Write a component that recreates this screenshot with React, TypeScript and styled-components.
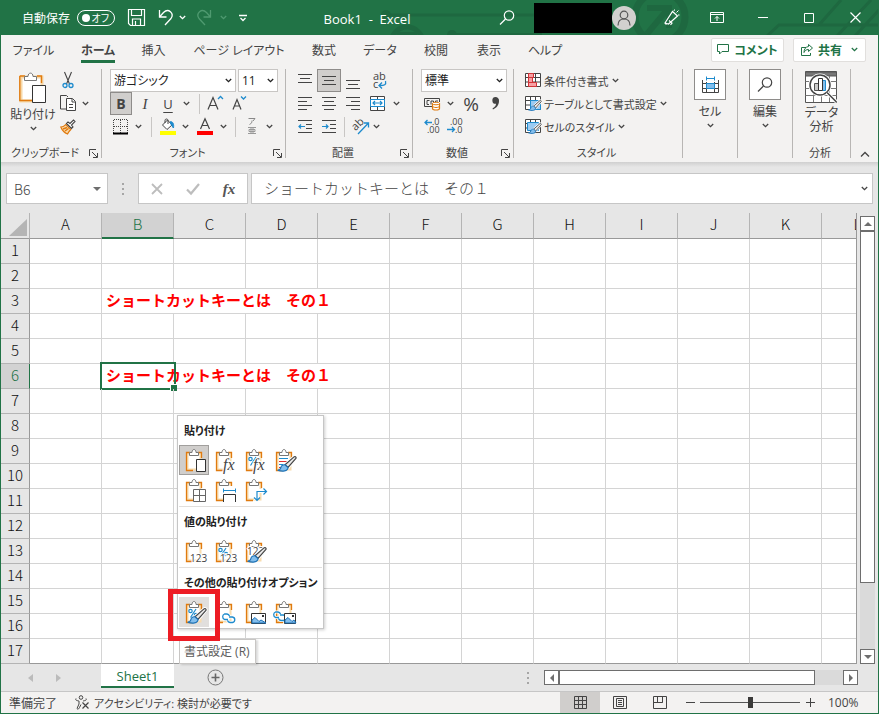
import React from "react";
import styled, { createGlobalStyle } from "styled-components";

const green = "#217346";
const ink = "#444444";
const blue = "#1e8bcd";
const orange = "#e07b10";
const uiFont = '"Open Sans", "Noto Sans CJK JP", sans-serif';
const jpFont = '"Noto Sans CJK JP", sans-serif';

const GlobalStyle = createGlobalStyle`
  * { box-sizing: border-box; }
  body { margin: 0; font-family: ${uiFont}; font-size: 12px; color: ${ink}; font-feature-settings: "palt"; }
  button, input, select { font: inherit; color: inherit; margin: 0; padding: 0; border: 0; background: none; border-radius: 0; font-feature-settings: inherit; }
  svg { display: block; flex: none; overflow: visible; }
`;

/* ---------- frame and title bar ---------- */

const Frame = styled.div`
  display: flex;
  flex-direction: column;
  min-height: 100vh;
  border: 1px solid ${green};
  border-top: 0;
  background: #e6e6e6;
`;

const TitleBar = styled.header`
  position: relative;
  display: flex;
  align-items: center;
  height: 35px;
  background: ${green};
  color: #fff;
`;

const TitlePattern = styled.svg`
  position: absolute;
  right: 0;
  top: 0;
  overflow: hidden;
`;

const QuickAccess = styled.div`
  display: flex;
  align-items: center;
  padding-left: 21px;
`;

const AutoSave = styled.label`
  display: flex;
  align-items: center;
  gap: 7px;
  white-space: nowrap;
`;

const Toggle = styled.span`
  position: relative;
  display: flex;
  align-items: center;
  justify-content: space-between;
  width: 38px;
  height: 16px;
  padding: 0 5px 0 4px;
  border: 1px solid #fff;
  border-radius: 8px;
  font-size: 10px;
  line-height: 14px;
`;

const ToggleInput = styled.input`
  position: absolute;
  inset: 0;
  opacity: 0;
`;

const Knob = styled.span`
  width: 8px;
  height: 8px;
  border-radius: 50%;
  background: #fff;
`;

const QuickButton = styled.button<{ $w: number; $dim?: boolean }>`
  display: flex;
  align-items: center;
  justify-content: center;
  width: ${(p) => p.$w}px;
  height: 32px;
  color: ${(p) => (p.$dim ? "#4f9a70" : "#fff")};
`;

const TitleText = styled.h1`
  position: relative;
  flex: 1;
  margin: 0;
  padding: 3px 14px 0 0;
  font-size: 13px;
  font-weight: 400;
  text-align: center;
  white-space: pre;
`;

const WindowTools = styled.div`
  position: relative;
  display: flex;
  align-items: center;
`;

const AccountName = styled.div`
  width: 78px;
  height: 30px;
  margin-left: 13px;
  background: #000;
`;

const Avatar = styled.button`
  display: flex;
  align-items: center;
  justify-content: center;
  width: 24px;
  height: 24px;
  margin-right: 12px;
  border-radius: 50%;
  background: #d2d0ce;
  color: #555;
`;

/* ---------- ribbon ---------- */

const TabRow = styled.nav`
  display: flex;
  align-items: center;
  height: 32px;
  padding-right: 12px;
  background: #f3f2f1;
`;

const Tab = styled.button<{ $w: number; $active?: boolean }>`
  display: flex;
  justify-content: center;
  width: ${(p) => p.$w}px;
  height: 32px;
  line-height: 32px;
  white-space: nowrap;
  font-weight: ${(p) => (p.$active ? 700 : 400)};
`;

const TabLabel = styled.span<{ $active?: boolean }>`
  height: 28px;
  border-bottom: ${(p) => (p.$active ? `3px solid ${green}` : "0")};
`;

const TabActions = styled.div`
  display: flex;
  gap: 9px;
  margin-left: auto;
  padding-bottom: 3px;
`;

const ActionButton = styled.button`
  display: flex;
  align-items: center;
  justify-content: center;
  gap: 5px;
  width: 73px;
  height: 24px;
  border: 1px solid #e1dfdd;
  border-radius: 2px;
  background: #fff;
  color: ${green};
  font-weight: 700;
  white-space: nowrap;
`;

const ActionText = styled.span`
  margin-right: 4px;
`;

const Ribbon = styled.section`
  display: flex;
  height: 95px;
  padding: 2px 0 4px;
  background: #f3f2f1;
`;

const Group = styled.div<{ $w: number; $pad?: number }>`
  display: flex;
  flex-direction: column;
  width: ${(p) => p.$w}px;
  padding-left: ${(p) => p.$pad ?? 0}px;
  border-right: 1px solid #b8b6b4;
`;

const GroupBody = styled.div`
  display: flex;
  flex: none;
  height: 74px;
`;

const Stack = styled.div`
  display: flex;
  flex-direction: column;
`;

const ToolRow = styled.div`
  display: flex;
  align-items: center;
  height: 23px;
`;

const GroupFooter = styled.div<{ $pad?: number }>`
  display: flex;
  flex: none;
  align-items: center;
  justify-content: center;
  height: 20px;
  padding-right: 3px;
  margin-left: -${(p) => p.$pad ?? 0}px;
  font-size: 11px;
  line-height: 20px;
  white-space: nowrap;
`;

const GroupName = styled.span`
  flex: 1;
  text-align: center;
`;

const Tool = styled.button<{ $w: number; $on?: boolean }>`
  display: flex;
  align-items: center;
  justify-content: center;
  width: ${(p) => p.$w}px;
  height: 23px;
  border: ${(p) => (p.$on ? "1px solid #8e8c8a" : "0")};
  background: ${(p) => (p.$on ? "#d0cecc" : "none")};
`;

const Glyph = styled.span<{ $size: number; $bold?: boolean; $italic?: boolean; $line?: boolean; $serif?: boolean }>`
  font-family: ${(p) => (p.$serif ? '"Liberation Serif", serif' : uiFont)};
  font-size: ${(p) => p.$size}px;
  line-height: 20px;
  font-weight: ${(p) => (p.$bold ? 700 : 400)};
  font-style: ${(p) => (p.$italic ? "italic" : "normal")};
  text-decoration: ${(p) => (p.$line ? "underline" : "none")};
  text-underline-offset: 3px;
`;

const Rule = styled.span<{ $l: number; $r: number }>`
  width: 1px;
  height: 20px;
  margin: 0 ${(p) => p.$r}px 0 ${(p) => p.$l}px;
  background: #c8c6c4;
`;

const Combo = styled.span<{ $w: number }>`
  position: relative;
  display: flex;
  align-items: center;
  width: ${(p) => p.$w}px;
  height: 23px;
  margin-right: 2px;
  border: 1px solid #c8c6c4;
  background: #fff;
  color: #222;
`;

const ComboSelect = styled.select`
  appearance: none;
  width: 100%;
  height: 21px;
  padding: 0 16px 0 3px;
  line-height: 21px;
`;

const ComboArrow = styled.span`
  position: absolute;
  right: 3px;
  top: 8px;
  pointer-events: none;
`;

const BigButton = styled.button<{ $w: number; $pad?: number }>`
  display: flex;
  flex-direction: column;
  align-items: center;
  width: ${(p) => p.$w}px;
  padding-top: ${(p) => p.$pad ?? 0}px;
  line-height: 15px;
  white-space: nowrap;
`;

const BigLabel = styled.span`
  padding: 4px 0;
  line-height: 15px;
`;

const TwoLine = styled.span`
  padding-top: 2px;
  line-height: 14px;
`;

const IconBox = styled.span`
  display: flex;
  align-items: center;
  justify-content: center;
  width: 32px;
  height: 31px;
  border: 1px solid #8e8c8a;
  background: #fff;
`;

const StyleButton = styled.button`
  display: flex;
  align-items: center;
  gap: 3px;
  height: 23px;
  font-size: 11px;
  white-space: nowrap;
`;

const CollapseButton = styled.button`
  display: flex;
  align-items: flex-end;
  justify-content: center;
  flex: 1;
`;

/* ---------- formula bar ---------- */

const FormulaRow = styled.div`
  display: flex;
  height: 51px;
  padding: 11px 5px 9px;
  background: linear-gradient(#cfcfcf, #e6e6e6 5px);
`;

const FieldBox = styled.div<{ $w?: number }>`
  display: flex;
  align-items: center;
  ${(p) => (p.$w ? `width: ${p.$w}px;` : "flex: 1; min-width: 0;")}
  height: 31px;
  border: 1px solid #c6c6c6;
  background: #fff;
`;

const NameInput = styled.input`
  width: 86px;
  padding-left: 7px;
  font-family: ${jpFont};
  font-size: 14px;
  font-weight: 300;
  outline: none;
`;

const FormulaInput = styled.input`
  flex: 1;
  min-width: 0;
  padding: 0 0 2px 12px;
  font-family: ${jpFont};
  font-size: 15px;
  font-weight: 300;
  font-feature-settings: normal;
  outline: none;
`;

const Grip = styled.div<{ $w: number }>`
  display: flex;
  flex-direction: column;
  align-items: center;
  justify-content: center;
  gap: 3px;
  width: ${(p) => p.$w}px;
`;

const Dot = styled.i`
  width: 2px;
  height: 2px;
  background: #a6a6a6;
`;

const FormulaTool = styled.button<{ $color: string }>`
  display: flex;
  align-items: center;
  justify-content: center;
  width: 36px;
  height: 29px;
  color: ${(p) => p.$color};
`;

/* ---------- sheet ---------- */

const SheetArea = styled.main`
  position: relative;
  display: flex;
  flex: 1;
`;

const GridClip = styled.div`
  flex: 1;
  min-width: 0;
  overflow: hidden;
  border-right: 1px solid #999;
  background: #fff;
`;

const Grid = styled.table`
  width: 893px;
  table-layout: fixed;
  border-collapse: separate;
  border-spacing: 0;
  font-family: ${jpFont};
  font-size: 15px;
  color: #222;
`;

const ColHead = styled.th<{ $on?: boolean }>`
  height: 26px;
  padding: 0;
  border-right: 1px solid #b4b4b4;
  border-bottom: ${(p) => (p.$on ? `2px solid ${green}` : "1px solid #999")};
  background: ${(p) => (p.$on ? "#d2d2d2" : "#e6e6e6")};
  color: ${(p) => (p.$on ? green : "#111")};
  font-weight: 300;
  line-height: 22px;
  vertical-align: top;
`;

const Corner = styled.th`
  padding: 0 2px 2px 8px;
  border-right: 1px solid #b4b4b4;
  border-bottom: 1px solid #999;
  background: #e6e6e6;
  vertical-align: bottom;
`;

const RowHead = styled.th<{ $on?: boolean }>`
  height: 25px;
  padding: 0;
  border-right: 1px solid ${(p) => (p.$on ? green : "#999")};
  border-bottom: 1px solid #b4b4b4;
  background: ${(p) => (p.$on ? "#d2d2d2" : "#e6e6e6")};
  color: ${(p) => (p.$on ? green : "#111")};
  font-weight: 300;
  line-height: 22px;
  vertical-align: top;
`;

const Cell = styled.td<{ $last?: boolean }>`
  position: relative;
  height: 25px;
  padding: 0 0 0 4px;
  border-right: 1px solid #d4d4d4;
  border-bottom: 1px solid ${(p) => (p.$last ? "#999" : "#d4d4d4")};
  color: #f00;
  font-weight: 700;
  line-height: 22px;
  vertical-align: top;
  white-space: nowrap;
  font-feature-settings: normal;
`;

const CellCursor = styled.span`
  position: absolute;
  left: -2px;
  top: -2px;
  width: 76px;
  height: 28px;
  border: 2px solid ${green};
  &::after {
    content: "";
    position: absolute;
    right: -3px;
    bottom: -3px;
    width: 6px;
    height: 6px;
    border: solid #fff;
    border-width: 1px 0 0 1px;
    background: ${green};
  }
`;

const VScroll = styled.div`
  display: flex;
  flex-direction: column;
  width: 15px;
  margin: 3px 3px 0 3px;
  background: #dadada;
`;

const HScroll = styled.div`
  display: flex;
  width: 314px;
  height: 15px;
  background: #dadada;
`;

const ScrollButton = styled.button`
  display: flex;
  align-items: center;
  justify-content: center;
  width: 15px;
  height: 15px;
  border: 1px solid #6e6e6e;
  background: #fff;
`;

const Thumb = styled.div<{ $vertical?: boolean }>`
  flex: ${(p) => (p.$vertical ? "352" : "256")};
  border: 1px solid #6e6e6e;
  background: #fff;
`;

const Track = styled.div<{ $vertical?: boolean }>`
  flex: ${(p) => (p.$vertical ? "66" : "28")};
`;

/* ---------- paste options ---------- */

const PasteMenu = styled.div`
  position: absolute;
  left: 176px;
  top: 202px;
  width: 147px;
  padding: 0 1px;
  border: 1px solid #c6c6c6;
  background: #fff;
  box-shadow: 1px 1px 3px rgba(0, 0, 0, 0.2);
`;

const MenuSection = styled.section`
  & + & { border-top: 1px solid #e1dfdd; }
`;

const MenuTitle = styled.h2`
  margin: 0;
  padding-left: 5px;
  font-family: ${jpFont};
  font-size: 11px;
  line-height: 29px;
  font-weight: 700;
  color: #222;
  white-space: nowrap;
`;

const MenuIcons = styled.div`
  display: flex;
  flex-wrap: wrap;
  padding-bottom: 1px;
`;

const MenuButton = styled.button<{ $state?: "on" | "hover" }>`
  width: 30px;
  height: 30px;
  background: ${(p) => (p.$state === "on" ? "#d0cecc" : p.$state === "hover" ? "#e1dfdd" : "none")};
  box-shadow: ${(p) => (p.$state === "on" ? "inset 0 0 0 1px #a19f9d" : "none")};
`;

const Highlight = styled.div`
  position: absolute;
  left: 167px;
  top: 376px;
  width: 52px;
  height: 52px;
  border: 5px solid #ed1c24;
`;

const Tooltip = styled.div`
  position: absolute;
  left: 178px;
  top: 426px;
  height: 25px;
  padding: 0 5px 0 4px;
  border: 1px solid #c8c6c4;
  background: #fff;
  color: #5c5c5c;
  line-height: 23px;
  white-space: nowrap;
  box-shadow: 2px 1px 2px rgba(0, 0, 0, 0.15);
`;

/* ---------- sheet tabs and status bar ---------- */

const SheetBar = styled.div`
  display: flex;
  align-items: center;
  height: 28px;
  padding: 0 20px 0 15px;
  border-bottom: 1px solid #c6c6c6;
`;

const NavButton = styled.button`
  display: flex;
  align-items: center;
  justify-content: center;
  width: 28px;
`;

const SheetTab = styled.button`
  align-self: flex-start;
  width: 73px;
  height: 24px;
  margin-left: 29px;
  border-bottom: 2px solid ${green};
  background: #fff;
  color: ${green};
  font-size: 13px;
  line-height: 24px;
`;

const AddSheet = styled.button`
  margin: 0 auto 0 33px;
`;

const StatusBar = styled.footer`
  display: flex;
  align-items: center;
  height: 21px;
  padding-left: 8px;
  background: #f3f2f1;
  white-space: nowrap;
`;

const StatusButton = styled.button`
  display: flex;
  align-items: center;
  gap: 4px;
  margin: 0 auto 0 18px;
  font-size: 11px;
`;

const ViewButton = styled.button<{ $on?: boolean }>`
  display: flex;
  align-items: center;
  justify-content: center;
  width: 40px;
  height: 21px;
  background: ${(p) => (p.$on ? "#d0cecc" : "none")};
`;

const ZoomButton = styled.button`
  display: flex;
  align-items: center;
  justify-content: center;
  width: 20px;
  height: 21px;
`;

const ZoomSlider = styled.input`
  appearance: none;
  width: 100px;
  height: 21px;
  background: linear-gradient(#555, #555) center / 100% 1px no-repeat;
  &::-webkit-slider-thumb {
    appearance: none;
    width: 5px;
    height: 11px;
    background: #3b3a39;
  }
`;

const ZoomValue = styled.span`
  width: 58px;
  padding-left: 8px;
`;

/* ---------- icons ---------- */

type IconProps = { w?: number; h?: number; children: React.ReactNode };

const Icon = ({ w = 16, h = 16, children }: IconProps) => (
  <svg width={w} height={h} viewBox={`0 0 ${w} ${h}`} fill="none" stroke="currentColor" aria-hidden="true">
    {children}
  </svg>
);

const Chevron = () => (
  <Icon w={7} h={5}>
    <path d="M.8 1l2.7 2.7L6.2 1" strokeWidth="1.3" />
  </Icon>
);

const Launcher = () => (
  <Icon w={9} h={9}>
    <path d="M.5 7V.5H7M3 3l5 5M8.5 4v4.5H4" />
  </Icon>
);

const Triangle = ({ dir }: { dir: "up" | "down" | "left" | "right" }) => {
  const d = { up: "M0 6h8L4 2z", down: "M0 2h8L4 6z", left: "M6 0v8L2 4z", right: "M2 0v8l4-4z" }[dir];
  return (
    <Icon w={8} h={8}>
      <path d={d} fill="#6e6e6e" stroke="none" />
    </Icon>
  );
};

const Person = () => (
  <Icon w={16} h={16}>
    <circle cx="8" cy="5" r="3.8" strokeWidth="1.2" />
    <path d="M2 15.500c0-4.500 2.500-6.500 6-6.500s6 2 6 6.500" strokeWidth="1.2" />
  </Icon>
);

const PasteLarge = () => (
  <Icon w={28} h={31}>
    <path d="M2 5h21v24H2z" fill="#fff" stroke="#f6d8a8" strokeWidth="3" />
    <path d="M.8 4v24.5h13M.8 4H6m12 0h4.500v7" stroke={orange} strokeWidth="1.4" />
    <path d="M5.500 8.500V4.500h3.500c0-4.500 5-4.500 5 0h3.500v4z" fill="#fff" stroke="#777" />
    <path d="M13.500 13.500h13v17h-13z" fill="#fff" stroke="#333" />
  </Icon>
);

const Cut = () => (
  <Icon w={12} h={17}>
    <path d="M2.500 0l5 12M9.500 0l-5 12" strokeWidth="1.1" />
    <circle cx="3" cy="13.500" r="2" stroke={blue} strokeWidth="1.3" />
    <circle cx="9" cy="13.500" r="2" stroke={blue} strokeWidth="1.3" />
  </Icon>
);

const Copy = () => (
  <Icon w={17} h={17}>
    <path d="M6 14H.5V.5h6L8 2" />
    <path d="M6.500 3.500h6l3 3v9h-9z" fill="#fff" />
    <path d="M12 4v3h3M9 9.500h4M9 12.500h4" />
  </Icon>
);

const Painter = () => (
  <Icon w={16} h={16}>
    <path d="M.8 8c3 0 4-1.500 5-2.500l5 5c-1 1-2.500 2.500-3.300 4.500C5 14 2 11 .8 8z" fill="#fbd9a8" stroke={orange} strokeWidth="1.200" />
    <path d="M3 10l4-1.500M5 12l3.500-2.500" stroke={orange} strokeWidth="1.500" />
    <path d="M6.500 4.500l5 5 1.500-1.500-1.500-2L15 2.500 13.500 1 10 4.500 8 3z" fill="#fff" strokeWidth="1.100" />
  </Icon>
);

const BordersIcon = () => (
  <Icon w={16} h={16}>
    <path d="M1 .5h14M1 7.500h14M.5 1v13M7.500 1v13M14.500 1v13" strokeDasharray="1 1" />
    <path d="M0 14.500h15" stroke="#000" strokeWidth="2" />
  </Icon>
);

const FillIcon = () => (
  <Icon w={16} h={17}>
    <path d="M2.500 7l5-5 4.500 5-5 4.500z" fill="#fff" />
    <path d="M5 5V2.500C5 .5 8 .5 8 2.500V6" />
    <path d="M10.500 3.500c3 .5 3.500 3 3 6.500-1.500-1-1-3-3-4z" fill={blue} stroke={blue} />
    <path d="M0 15h16" stroke="#ff0" strokeWidth="4" />
  </Icon>
);

const FontColorIcon = () => (
  <Icon w={16} h={17}>
    <path d="M3.500 11L8 .8 12.500 11M5 7.500h6" strokeWidth="1.2" />
    <path d="M0 15h16" stroke="#f00" strokeWidth="4" />
  </Icon>
);

const PhoneticIcon = () => (
  <Icon w={10} h={17}>
    <path d="M1.500 .5h6.500L6 3M5 2.500c0 2-.5 3-2.500 4" stroke="#888" />
    <path d="M1 9.500h8M2 11.500h6v2H2zM1 15.500h8M4 9v6M6 9v6" stroke="#999" />
  </Icon>
);

const GrowIcon = ({ down }: { down?: boolean }) => (
  <Icon w={17} h={17}>
    <path d={down ? "M2 14.500l4-10 4 10M3.500 11h5" : "M1 14.500L6 2.500l5 12M3 10.500h6"} strokeWidth="1.2" />
    <path d={down ? "M10 1.500l2.500 2.500L15 1.500" : "M11 4L13.500 1.500 16 4"} stroke={blue} strokeWidth="1.3" />
  </Icon>
);

const Lines = ({ rows, y = 1 }: { rows: Array<[number, number]>; y?: number }) => (
  <Icon w={15} h={16}>
    {rows.map(([x, w], i) => (
      <path key={i} d={`M${x} ${y + i * 4 + 0.5}h${w}`} />
    ))}
  </Icon>
);

const IndentIcon = ({ more }: { more?: boolean }) => (
  <Icon w={15} h={15}>
    <path d="M0 1.500h14M8 5.500h6M8 9.500h6M0 13.500h14" />
    <path d={more ? "M0 7.500h6M4 5.500l2 2-2 2" : "M1 7.500h6M3 5.500l-2 2 2 2"} stroke={blue} strokeWidth="1.2" />
  </Icon>
);

const WrapIcon = () => (
  <Icon w={16} h={18}>
    <text x="1" y="8" fontSize="11" fill="currentColor" stroke="none">ab</text>
    <text x="1" y="16" fontSize="11" fill="currentColor" stroke="none">c</text>
    <path d="M13.500 9c1 4-1 4.500-6 4.500M10 10.500l-3 3 3 3" stroke={blue} strokeWidth="1.3" />
  </Icon>
);

const MergeIcon = () => (
  <Icon w={16} h={16}>
    <path d="M.5.5h14v14H.5zM7.500.5v3M7.500 11v3" fill="#fff" />
    <path d="M.5 3.500h14v7H.5z" fill="#fff" stroke={blue} />
    <path d="M3 7h9M5 5L3 7l2 2M10 5l2 2-2 2" stroke={blue} strokeWidth="1.2" />
  </Icon>
);

const OrientIcon = () => (
  <Icon w={18} h={17}>
    <text x="1" y="11" fontSize="11" transform="rotate(-45 5 9)" fill="currentColor" stroke="none">ab</text>
    <path d="M6 16L16 5.500M12 5h4.500v4.500" stroke={blue} strokeWidth="1.3" />
  </Icon>
);

const CurrencyIcon = () => (
  <Icon w={17} h={14}>
    <path d="M8 9.500H.5v-8h15V5" />
    <path d="M5.500 3.500H3v4h2M7 7.500V4h2.500v3M11.500 6V4H14" />
    <path d="M8.500 6.500v5c0 2 7 2 7 0v-5z" fill="#fff" stroke={orange} strokeWidth="1.2" />
    <ellipse cx="12" cy="6.500" rx="3.500" ry="1.300" fill="#fff" stroke={orange} />
    <path d="M8.500 9c0 2 7 2 7 0" stroke={orange} />
  </Icon>
);

const DecimalIcon = ({ less }: { less?: boolean }) => (
  <Icon w={17} h={17}>
    <text x={less ? 3 : 8} y="7" fontSize="9" fill="currentColor" stroke="none">{less ? ".00" : ".0"}</text>
    <text x={less ? 8 : 3} y="15" fontSize="9" fill="currentColor" stroke="none">{less ? ".0" : ".00"}</text>
    <path d={less ? "M0 11.500h7M5 9l2.500 2.500L5 14" : "M1 4.500h7M3.500 2L1 4.500 3.500 7"} stroke={blue} strokeWidth="1.3" />
  </Icon>
);

const CommaIcon = () => (
  <Icon w={9} h={13}>
    <path d="M4.500 0a3.500 3.500 0 0 1 3.500 4c0 4-2.500 7-6 8.500l-.5-1C4 10 5 8.500 5 6.800A3.300 3.300 0 1 1 4.500 0z" fill="#444" stroke="none" />
  </Icon>
);

const TableBase = () => <path d="M.5.500h15v13H.5zM.5 4.500h15M.5 9h15M5.500.5v13M10.500.5v13" fill="#fff" stroke="#444" />;

const Brush = ({ x = 0, y = 0, s = 1 }: { x?: number; y?: number; s?: number }) => (
  <g transform={`translate(${x} ${y}) scale(${s})`}>
    <path d="M18.500.8c.8.600.800 1.200.2 1.800L11 11.500 8 8.800 17 .9c.5-.4 1-.4 1.500-.1z" fill="#fff" stroke="#fff" strokeWidth="3" />
    <path d="M18.500.8c.8.600.800 1.200.2 1.800L11 11.500 8 8.800 17 .9c.5-.4 1-.4 1.500-.1z" fill="#e8e8e8" stroke="#444" strokeWidth="1.200" />
    <path d="M8 8.800c-2.800-.3-4 1.700-4.300 3.300-.3 1.300-1.300 2-3 2 4.500 1.700 10.300 1.200 10.300-2.600z" fill="#83beec" stroke="#1c72b8" strokeWidth="1.200" />
  </g>
);

const ConditionalIcon = () => (
  <Icon w={16} h={15}>
    <TableBase />
    <path d="M3.500.500h5v4h-5zM3.500 4.500h4v5h-4zM3.500 9.500h8v4h-8z" fill="#f7a1a5" stroke="#d13438" />
  </Icon>
);

const TableStyleIcon = ({ solid }: { solid?: boolean }) => (
  <Icon w={16} h={16}>
    <TableBase />
    <path d={solid ? "M2.500 3.500h11v8h-11z" : "M5.500 4.500h10v9h-10z"} fill="#9bcbf2" stroke={blue} />
    <Brush x={3} y={4} s={0.7} />
  </Icon>
);

const CellsIcon = () => (
  <Icon w={17} h={17}>
    <path d="M.5 4v12.500h16V4M.5 7.500h16M.5 12.500h16M4.500 6v10.500M12.500 6v10.500" />
    <path d="M4.500 7.500h8v5h-8z" fill="#83beec" stroke={blue} />
    <path d="M4 2.500h9M4.500.5v4M12.500.5v4" stroke={blue} />
  </Icon>
);

const SearchIcon = () => (
  <Icon w={16} h={16}>
    <circle cx="10" cy="5.500" r="4.700" strokeWidth="1.200" />
    <path d="M6.500 9L1 14.500" strokeWidth="1.200" />
  </Icon>
);

const AnalysisIcon = () => (
  <Icon w={33} h={33}>
    <path d="M.5.500h31v31H.5z" fill="#fff" stroke="#555" />
    <path d="M.5 1h31v4H.5z" fill="#777" stroke="#555" />
    <path d="M.5 10.500h31M.5 17.500h31M.5 24.500h31M8.500 5v26M16.500 5v26M24.500 5v26" stroke="#777" />
    <circle cx="15" cy="14" r="11.500" fill="#fff" stroke="none" />
    <circle cx="15" cy="14" r="10" fill="#fff" stroke="#444" strokeWidth="1.500" />
    <path d="M22 21.500l9.500 9.500" strokeWidth="3.500" stroke="#fff" />
    <path d="M22 21.500l9.500 9.500" strokeWidth="1.500" stroke="#444" />
    <path d="M9.500 12.500h4v7h-4z" fill="#ccc" stroke="#555" />
    <path d="M17.500 9.500h3v10h-3z" fill="#83beec" stroke={blue} />
    <path d="M13.500 7.500h4v12h-4z" fill="#fff" stroke="#333" />
  </Icon>
);

const Clipboard = ({ children }: { children?: React.ReactNode }) => (
  <Icon w={30} h={30}>
    <path d="M8.500 8.500h13v16h-13z" fill="#fff" stroke="#f8dcae" strokeWidth="2" />
    <path d="M11 7.500H7.500v18H14M19 7.500h3.500V13" stroke={orange} strokeWidth="1.300" />
    <path d="M10.500 10.500v-3h2.500c0-4 4-4 4 0h2.500v3z" fill="#fff" stroke="#777" />
    {children}
  </Icon>
);

const Digits = ({ y = 26, x = 11 }: { y?: number; x?: number }) => (
  <text x={x} y={y} fontSize="10" fill="#444" stroke="#fff" strokeWidth="2" paintOrder="stroke">123</text>
);
const FxText = () => (
  <text x="14" y="25" fontSize="16" fontStyle="italic" fontFamily="Liberation Serif, serif" fill="#444" stroke="#fff" strokeWidth="2" paintOrder="stroke">fx</text>
);
const Percent = () => (
  <g stroke={blue} strokeWidth="1.200">
    <path d="M17 12l-5.500 8.500" />
    <circle cx="11.500" cy="14" r="1.700" />
    <circle cx="17" cy="18" r="1.700" />
  </g>
);
const LinkMark = ({ x, y }: { x: number; y: number }) => (
  <g transform={`translate(${x} ${y})`}>
    <path d="M7 6.500H3.500a3 3 0 0 1 0-5.500H6a3 3 0 0 1 2.500 2M8 4h3.500a2.800 2.800 0 0 1 0 5.500H9a3 3 0 0 1-2.500-2" stroke="#fff" strokeWidth="3" />
    <path d="M7 6.500H3.500a3 3 0 0 1 0-5.500H6a3 3 0 0 1 2.500 2M8 4h3.500a2.800 2.800 0 0 1 0 5.500H9a3 3 0 0 1-2.500-2" stroke={blue} strokeWidth="1.300" />
  </g>
);
const Picture = ({ x, w }: { x: number; w: number }) => (
  <g>
    <path d={`M${x}.500 16.500h${w}v10h-${w}z`} fill="#fff" stroke="#333" />
    <path d={`M${x + 1} 26v-3l3-2.500 4 4 2-1.500 ${w - 9} 3z`} fill="#83beec" stroke="#1c72b8" />
    <path d={`M${x + w - 3} 19h2`} stroke="#333" strokeWidth="2" />
  </g>
);

const AccessibilityIcon = () => (
  <Icon w={15} h={15}>
    <circle cx="6" cy="2.500" r="1.800" />
    <path d="M1 3.500c-1 2 1 2 3 2.500v3l-2 4.500c1 1.500 2 0 2.500-1L6 9.500M11 3.500c1 2-1 2-3 2.500" />
    <path d="M7.500 7.500l6 6M13.500 7.500l-6 6" strokeWidth="1.200" />
  </Icon>
);

/* ---------- data ---------- */

const tabs: Array<[string, number]> = [
  ["ファイル", 65], ["ホーム", 64], ["挿入", 47], ["ページ レイアウト", 124], ["数式", 46],
  ["データ", 66], ["校閲", 46], ["表示", 60], ["ヘルプ", 52],
];
const columns = ["A", "B", "C", "D", "E", "F", "G", "H", "I", "J", "K", "L"];
const rows = Array.from({ length: 17 }, (_, i) => i + 1);
const phrase = "ショートカットキーとは　その１";
const cellText: Record<number, string> = { 3: phrase, 6: phrase };

const Drop = ({ w = 14, label }: { w?: number; label: string }) => (
  <Tool $w={w} aria-label={label}><Chevron /></Tool>
);

const Footer = ({ name, pad, launch }: { name: string; pad?: number; launch?: boolean }) => (
  <GroupFooter $pad={pad}>
    <GroupName>{name}</GroupName>
    {launch && <button aria-label={`${name}の設定`}><Launcher /></button>}
  </GroupFooter>
);

const TitleSection = () => (
  <TitleBar>
    <TitlePattern width="500" height="35" viewBox="379 0 500 35" fill="none" stroke="#1e6840" aria-hidden="true">
      <circle cx="387" cy="15" r="5" fill="#1e6840" stroke="none" />
      <path d="M387 15h150" strokeWidth="3" />
      <circle cx="408" cy="43" r="16" strokeWidth="5" />
      <path d="M398 34h20" strokeWidth="4" />
      <circle cx="453" cy="35" r="5" fill="#1e6840" stroke="none" />
      <path d="M453 35h90" strokeWidth="4" />
      <circle cx="661" cy="17" r="25" strokeWidth="7" />
      <path d="M648 8h22v20M668 10l-20 24" strokeWidth="6" />
      <path d="M768 36l12-11h99M838 36l34-36M820 25l22-25M856 36l24-26" strokeWidth="3" />
    </TitlePattern>
    <QuickAccess>
      <AutoSave>
        自動保存
        <Toggle>
          <ToggleInput type="checkbox" role="switch" />
          <Knob />オフ
        </Toggle>
      </AutoSave>
      <QuickButton $w={42} aria-label="上書き保存">
        <Icon w={17} h={17}><path d="M.5.500h16v16h-14l-2-2zM3.500.500v6h10v-6M4.500 16v-6h8v6M7.500 12v4" strokeWidth="1.200" /></Icon>
      </QuickButton>
      <QuickButton $w={18} aria-label="元に戻す">
        <Icon w={16} h={17}><path d="M1.500 1v7h7M1.500 8l4-4.500c5-5 11 1 7.500 6L7 16" strokeWidth="1.300" /></Icon>
      </QuickButton>
      <QuickButton $w={15} aria-label="元に戻すの一覧"><Chevron /></QuickButton>
      <QuickButton $w={27} $dim aria-label="やり直し">
        <Icon w={16} h={17}><path d="M14.500 1v7h-7M14.500 8l-4-4.500c-5-5-11 1-7.500 6L9 16" strokeWidth="1.300" /></Icon>
      </QuickButton>
      <QuickButton $w={13} $dim aria-label="やり直しの一覧"><Chevron /></QuickButton>
      <QuickButton $w={25} aria-label="クイック アクセスの設定">
        <Icon w={8} h={8}><path d="M0 1.500h8M1.500 4L4 6.500 6.500 4" strokeWidth="1.300" /></Icon>
      </QuickButton>
    </QuickAccess>
    <TitleText>{"Book1  -  Excel"}</TitleText>
    <WindowTools>
      <QuickButton $w={28} aria-label="検索"><SearchIcon /></QuickButton>
      <AccountName />
      <Avatar aria-label="アカウント"><Person /></Avatar>
      <QuickButton $w={46} aria-label="新機能">
        <Icon w={17} h={17}>
          <path d="M2 14L9.500 2.500l5 4.500-9 8zM2 14l1.500 1.500M6 11.500l3 2.500-1.500 2" strokeWidth="1.200" />
          <path d="M11 2l.5-1.500M13.500 3.500L15.500 1.500M15 6h1.500" />
        </Icon>
      </QuickButton>
      <QuickButton $w={46} aria-label="リボンの表示オプション">
        <Icon w={14} h={12}><path d="M.5.500h13v10H.5zM.5 2.500h13M7 9V4.500M5 6.500l2-2 2 2" /></Icon>
      </QuickButton>
      <QuickButton $w={46} aria-label="最小化"><Icon w={10} h={10}><path d="M0 4.500h10" /></Icon></QuickButton>
      <QuickButton $w={46} aria-label="最大化"><Icon w={10} h={10}><path d="M.5.500h9v9h-9z" /></Icon></QuickButton>
      <QuickButton $w={46} aria-label="閉じる"><Icon w={11} h={11}><path d="M.5.500l10 10M10.500.500l-10 10" strokeWidth="1.200" /></Icon></QuickButton>
    </WindowTools>
  </TitleBar>
);

const RibbonSection = () => (
  <Ribbon>
    <Group $w={101} $pad={5}>
      <GroupBody>
        <BigButton $w={54} $pad={3}>
          <PasteLarge />
          <BigLabel>貼り付け</BigLabel>
          <Chevron />
        </BigButton>
        <Stack>
          <ToolRow><Tool $w={16} aria-label="切り取り"><Cut /></Tool></ToolRow>
          <ToolRow><Tool $w={16} aria-label="コピー"><Copy /></Tool><Drop w={18} label="コピーのオプション" /></ToolRow>
          <ToolRow><Tool $w={16} aria-label="書式のコピー"><Painter /></Tool></ToolRow>
        </Stack>
      </GroupBody>
      <Footer name="クリップボード" pad={5} launch />
    </Group>

    <Group $w={184} $pad={8}>
      <GroupBody>
        <Stack>
          <ToolRow>
            <Combo $w={126}>
              <ComboSelect aria-label="フォント"><option>游ゴシック</option></ComboSelect>
              <ComboArrow><Chevron /></ComboArrow>
            </Combo>
            <Combo $w={40}>
              <ComboSelect aria-label="フォント サイズ"><option>11</option></ComboSelect>
              <ComboArrow><Chevron /></ComboArrow>
            </Combo>
          </ToolRow>
          <ToolRow>
            <Tool $w={22} $on aria-label="太字"><Glyph $size={14} $bold>B</Glyph></Tool>
            <Tool $w={26} aria-label="斜体"><Glyph $size={15} $italic $serif>I</Glyph></Tool>
            <Tool $w={20} aria-label="下線"><Glyph $size={13} $line>U</Glyph></Tool>
            <Drop w={17} label="下線の種類" />
            <Rule $l={4} $r={5} />
            <Tool $w={20} aria-label="フォント サイズの拡大"><GrowIcon /></Tool>
            <Tool $w={28} aria-label="フォント サイズの縮小"><GrowIcon down /></Tool>
          </ToolRow>
          <ToolRow>
            <Tool $w={21} aria-label="罫線"><BordersIcon /></Tool>
            <Drop w={15} label="罫線の種類" />
            <Rule $l={5} $r={7} />
            <Tool $w={17} aria-label="塗りつぶしの色"><FillIcon /></Tool>
            <Drop w={18} label="塗りつぶしの色の一覧" />
            <Tool $w={22} aria-label="フォントの色"><FontColorIcon /></Tool>
            <Drop w={14} label="フォントの色の一覧" />
            <Rule $l={5} $r={7} />
            <Tool $w={18} aria-label="ふりがな"><PhoneticIcon /></Tool>
            <Drop w={16} label="ふりがなの設定" />
          </ToolRow>
        </Stack>
      </GroupBody>
      <Footer name="フォント" pad={8} launch />
    </Group>

    <Group $w={127} $pad={7}>
      <GroupBody>
        <Stack>
          <ToolRow>
            <Tool $w={24} aria-label="上揃え"><Lines rows={[[0, 14], [2, 10], [0, 14]]} /></Tool>
            <Tool $w={24} $on aria-label="上下中央揃え"><Lines y={3} rows={[[0, 14], [2, 10], [0, 14]]} /></Tool>
            <Tool $w={24} aria-label="下揃え"><Lines y={7} rows={[[0, 14], [2, 10], [0, 14]]} /></Tool>
            <Tool $w={30} aria-label="折り返して全体を表示する"><WrapIcon /></Tool>
          </ToolRow>
          <ToolRow>
            <Tool $w={24} aria-label="左揃え"><Lines rows={[[0, 14], [0, 9], [0, 14], [0, 9]]} /></Tool>
            <Tool $w={24} aria-label="中央揃え"><Lines rows={[[0, 14], [2, 10], [0, 14], [2, 10]]} /></Tool>
            <Tool $w={24} aria-label="右揃え"><Lines rows={[[0, 14], [5, 9], [0, 14], [5, 9]]} /></Tool>
            <Tool $w={26} aria-label="セルを結合して中央揃え"><MergeIcon /></Tool>
            <Drop w={10} label="結合の種類" />
          </ToolRow>
          <ToolRow>
            <Tool $w={24} aria-label="インデントを減らす"><IndentIcon /></Tool>
            <Tool $w={24} aria-label="インデントを増やす"><IndentIcon more /></Tool>
            <Rule $l={3} $r={7} />
            <Tool $w={18} aria-label="方向"><OrientIcon /></Tool>
            <Drop w={12} label="方向の一覧" />
          </ToolRow>
        </Stack>
      </GroupBody>
      <Footer name="配置" pad={7} launch />
    </Group>

    <Group $w={101} $pad={8}>
      <GroupBody>
        <Stack>
          <ToolRow>
            <Combo $w={86}>
              <ComboSelect aria-label="表示形式"><option>標準</option></ComboSelect>
              <ComboArrow><Chevron /></ComboArrow>
            </Combo>
          </ToolRow>
          <ToolRow>
            <Tool $w={22} aria-label="通貨表示形式"><CurrencyIcon /></Tool>
            <Drop w={14} label="通貨の一覧" />
            <Tool $w={28} aria-label="パーセント スタイル"><Glyph $size={19}>%</Glyph></Tool>
            <Tool $w={20} aria-label="桁区切りスタイル"><CommaIcon /></Tool>
          </ToolRow>
          <ToolRow>
            <Tool $w={23} aria-label="小数点以下の表示桁数を増やす"><DecimalIcon /></Tool>
            <Tool $w={23} aria-label="小数点以下の表示桁数を減らす"><DecimalIcon less /></Tool>
          </ToolRow>
        </Stack>
      </GroupBody>
      <Footer name="数値" pad={8} launch />
    </Group>

    <Group $w={169} $pad={11}>
      <GroupBody>
        <Stack>
          <StyleButton><ConditionalIcon />条件付き書式 <Chevron /></StyleButton>
          <StyleButton><TableStyleIcon />テーブルとして書式設定 <Chevron /></StyleButton>
          <StyleButton><TableStyleIcon solid />セルのスタイル <Chevron /></StyleButton>
        </Stack>
      </GroupBody>
      <Footer name="スタイル" pad={11} />
    </Group>

    <Group $w={55}>
      <BigButton $w={54}>
        <IconBox><CellsIcon /></IconBox>
        <BigLabel>セル</BigLabel>
        <Chevron />
      </BigButton>
    </Group>
    <Group $w={55}>
      <BigButton $w={54}>
        <IconBox><SearchIcon /></IconBox>
        <BigLabel>編集</BigLabel>
        <Chevron />
      </BigButton>
    </Group>
    <Group $w={58}>
      <GroupBody>
        <BigButton $w={57} $pad={2}>
          <AnalysisIcon />
          <TwoLine>データ<br />分析</TwoLine>
        </BigButton>
      </GroupBody>
      <Footer name="分析" />
    </Group>
    <CollapseButton aria-label="リボンを折りたたむ">
      <Icon w={10} h={7}><path d="M1 5.500l4-4 4 4" strokeWidth="1.300" /></Icon>
    </CollapseButton>
  </Ribbon>
);

const PasteOptions = () => (
  <PasteMenu role="menu">
    <MenuSection>
      <MenuTitle>貼り付け</MenuTitle>
      <MenuIcons>
        <MenuButton $state="on" aria-label="貼り付け"><Clipboard><path d="M17.500 14.500h9v12h-9z" fill="#fff" stroke="#333" /></Clipboard></MenuButton>
        <MenuButton aria-label="数式"><Clipboard><FxText /></Clipboard></MenuButton>
        <MenuButton aria-label="数式と数値の書式"><Clipboard><Percent /><FxText /></Clipboard></MenuButton>
        <MenuButton aria-label="元の書式を保持"><Clipboard><path d="M10 13.500h9M10 19.500h6" stroke={blue} /><path d="M10 16.500h8M10 22.500h3" stroke="#e03030" /><Brush x={8} y={11} /></Clipboard></MenuButton>
        <MenuButton aria-label="罫線なし"><Clipboard><path d="M14.500 14.500h12v12h-12zM20.500 14.500v12M14.500 20.500h12" fill="#fff" stroke="#666" /></Clipboard></MenuButton>
        <MenuButton aria-label="元の列幅を保持"><Clipboard><path d="M14 11h14v16H14z" fill="#fff" stroke="none" /><path d="M14.500 27v-7.500h12V27" stroke="#333" /><path d="M15 15.500h11M14.500 13.500v4M26.500 13.500v4" stroke={blue} /></Clipboard></MenuButton>
        <MenuButton aria-label="行列の入れ替え"><Clipboard><path d="M24 16h-7v9" stroke="#fff" strokeWidth="4" /><path d="M27 16.500h-9v9M24.500 13.500l3 3-3 3M15 22.500l3 3 3-3" stroke={blue} strokeWidth="1.200" /></Clipboard></MenuButton>
      </MenuIcons>
    </MenuSection>
    <MenuSection>
      <MenuTitle>値の貼り付け</MenuTitle>
      <MenuIcons>
        <MenuButton aria-label="値"><Clipboard><Digits /></Clipboard></MenuButton>
        <MenuButton aria-label="値と数値の書式"><Clipboard><Percent /><Digits /></Clipboard></MenuButton>
        <MenuButton aria-label="値と元の書式"><Clipboard><Digits x={8} y={19} /><Brush x={8} y={11} /></Clipboard></MenuButton>
      </MenuIcons>
    </MenuSection>
    <MenuSection>
      <MenuTitle>その他の貼り付けオプション</MenuTitle>
      <MenuIcons>
        <MenuButton $state="hover" aria-label="書式設定"><Clipboard><Percent /><Brush x={8} y={11} /></Clipboard></MenuButton>
        <MenuButton aria-label="リンク貼り付け"><Clipboard><LinkMark x={12} y={16} /></Clipboard></MenuButton>
        <MenuButton aria-label="図"><Clipboard><Picture x={12} w={14} /></Clipboard></MenuButton>
        <MenuButton aria-label="リンクされた図"><Clipboard><LinkMark x={3} y={14} /><Picture x={15} w={11} /></Clipboard></MenuButton>
      </MenuIcons>
    </MenuSection>
  </PasteMenu>
);

const Sheet = () => (
  <SheetArea>
    <GridClip>
      <Grid>
        <colgroup>
          <col width={29} />
          {columns.map((c) => <col key={c} width={72} />)}
        </colgroup>
        <thead>
          <tr>
            <Corner aria-label="すべて選択"><Icon w={18} h={17}><path d="M18 0v17H0z" fill="#b4b4b4" stroke="none" /></Icon></Corner>
            {columns.map((c) => <ColHead key={c} $on={c === "B"}>{c}</ColHead>)}
          </tr>
        </thead>
        <tbody>
          {rows.map((r) => (
            <tr key={r}>
              <RowHead $on={r === 6}>{r}</RowHead>
              {columns.map((c, i) => {
                const text = cellText[r];
                if (text && i > 1 && i < 5) return null;
                const filled = text && i === 1;
                return (
                  <Cell key={c} colSpan={filled ? 4 : 1} $last={r === rows.length}>
                    {filled ? text : null}
                    {filled && r === 6 ? <CellCursor /> : null}
                  </Cell>
                );
              })}
            </tr>
          ))}
        </tbody>
      </Grid>
    </GridClip>
    <VScroll>
      <ScrollButton aria-label="上へスクロール"><Triangle dir="up" /></ScrollButton>
      <Thumb $vertical />
      <Track $vertical />
      <ScrollButton aria-label="下へスクロール"><Triangle dir="down" /></ScrollButton>
    </VScroll>
    <PasteOptions />
    <Tooltip role="tooltip">書式設定 (R)</Tooltip>
    <Highlight />
  </SheetArea>
);

export default function App() {
  return (
    <>
      <GlobalStyle />
      <Frame>
        <TitleSection />
        <TabRow>
          {tabs.map(([name, w]) => (
            <Tab key={name} $w={w} $active={name === "ホーム"}>
              <TabLabel $active={name === "ホーム"}>{name}</TabLabel>
            </Tab>
          ))}
          <TabActions>
            <ActionButton>
              <Icon w={12} h={11}><path d="M.5.500h11v7H5L2.500 10V7.500h-2z" /></Icon>
              コメント
            </ActionButton>
            <ActionButton>
              <Icon w={12} h={12}><path d="M5 3.500H.5v8h9V9" /><path d="M7.500.5l4 3.500-4 3.500v-2C5 5.500 4 6.500 3 8.500c0-3.500 1.500-5.500 4.500-6z" /></Icon>
              <ActionText>共有</ActionText>
              <Chevron />
            </ActionButton>
          </TabActions>
        </TabRow>
        <RibbonSection />
        <FormulaRow>
          <FieldBox $w={102}>
            <NameInput aria-label="名前ボックス" defaultValue="B6" />
            <button aria-label="名前の一覧"><Triangle dir="down" /></button>
          </FieldBox>
          <Grip $w={30}><Dot /><Dot /><Dot /></Grip>
          <FieldBox $w={110}>
            <FormulaTool $color="#bdbdbd" aria-label="キャンセル"><Icon w={12} h={12}><path d="M1 1l10 10M11 1L1 11" strokeWidth="1.800" /></Icon></FormulaTool>
            <FormulaTool $color="#bdbdbd" aria-label="入力"><Icon w={14} h={12}><path d="M1 6.500l4 4L13 1" strokeWidth="2.200" /></Icon></FormulaTool>
            <FormulaTool $color="#555" aria-label="関数の挿入"><Glyph $size={15} $italic $bold $serif>fx</Glyph></FormulaTool>
          </FieldBox>
          <Grip $w={3} />
          <FieldBox>
            <FormulaInput aria-label="数式バー" defaultValue={phrase} />
            <Drop w={16} label="数式バーの展開" />
          </FieldBox>
        </FormulaRow>
        <Sheet />
        <SheetBar>
          <NavButton aria-label="前のシート"><Icon w={5} h={8}><path d="M5 0v8L0 4z" fill="#bbb" stroke="none" /></Icon></NavButton>
          <NavButton aria-label="次のシート"><Icon w={5} h={8}><path d="M0 0v8l5-4z" fill="#bbb" stroke="none" /></Icon></NavButton>
          <SheetTab>Sheet1</SheetTab>
          <AddSheet aria-label="新しいシート">
            <Icon w={17} h={17}><circle cx="8.500" cy="8.500" r="7.500" stroke="#777" /><path d="M4.500 8.500h8M8.500 4.500v8" stroke="#666" strokeWidth="1.600" /></Icon>
          </AddSheet>
          <Grip $w={32}><Dot /><Dot /><Dot /></Grip>
          <HScroll>
            <ScrollButton aria-label="左へスクロール"><Triangle dir="left" /></ScrollButton>
            <Thumb />
            <Track />
            <ScrollButton aria-label="右へスクロール"><Triangle dir="right" /></ScrollButton>
          </HScroll>
        </SheetBar>
        <StatusBar>
          準備完了
          <StatusButton><AccessibilityIcon />アクセシビリティ: 検討が必要です</StatusButton>
          <ViewButton $on aria-label="標準"><Icon w={13} h={13}><path d="M.5.500h12v12H.5zM.5 4.500h12M.5 8.500h12M4.500.5v12M8.500.5v12" /></Icon></ViewButton>
          <ViewButton aria-label="ページ レイアウト"><Icon w={14} h={13}><path d="M.5.500h13v12H.5zM3.500 2.500h7v8h-7zM5 4.500h4M5 6.500h4M5 8.500h4" /></Icon></ViewButton>
          <ViewButton aria-label="改ページ プレビュー"><Icon w={14} h={13}><path d="M.5.500h13v12H.5zM4.500.5v6h5v-6M9.500 6.500h-9" /></Icon></ViewButton>
          <ZoomButton aria-label="縮小"><Icon w={9} h={9}><path d="M0 4.500h9" /></Icon></ZoomButton>
          <ZoomSlider type="range" min={0} max={100} defaultValue={50} aria-label="ズーム" />
          <ZoomButton aria-label="拡大"><Icon w={9} h={9}><path d="M0 4.500h9M4.500 0v9" /></Icon></ZoomButton>
          <ZoomValue>100%</ZoomValue>
        </StatusBar>
      </Frame>
    </>
  );
}
